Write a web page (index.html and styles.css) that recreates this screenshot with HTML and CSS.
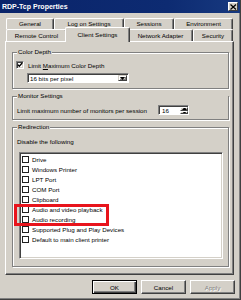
FILE: index.html
```html
<!DOCTYPE html>
<html>
<head>
<meta charset="utf-8">
<link rel="stylesheet" href="styles.css">
</head>
<body>
<div class="window">
  <div class="titlebar">
    <span class="title">RDP-Tcp Properties</span>
    <span class="close"><svg width="7" height="6" viewBox="0 0 7 6"><path d="M0.5 0.5 L6 5.5 M6 0.5 L0.5 5.5" stroke="#000" stroke-width="1.2"/></svg></span>
  </div>
  <div class="tabs">
    <div class="tabrow back">
      <div class="tab">General</div>
      <div class="tab">Log on Settings</div>
      <div class="tab">Sessions</div>
      <div class="tab">Environment</div>
    </div>
    <div class="tabrow front">
      <div class="tab">Remote Control</div>
      <div class="tab selected">Client Settings</div>
      <div class="tab">Network Adapter</div>
      <div class="tab">Security</div>
    </div>
  </div>
  <div class="panel">
    <div class="group g-color">
      <span class="legend">Color Depth</span>
      <div class="checkrow">
        <span class="cb checked"><svg width="6" height="6" viewBox="0 0 6 6"><path d="M0.8 2.6 L2.3 4.2 L5.2 1" fill="none" stroke="#000" stroke-width="1.3"/></svg></span>
        <span>Limit <u>M</u>aximum Color Depth</span>
      </div>
      <div class="combo">
        <span class="combo-text">16 bits per pixel</span>
        <span class="combo-btn"><svg width="5" height="3" viewBox="0 0 5 3"><path d="M0 0 H5 L2.5 3 Z" fill="#000"/></svg></span>
      </div>
    </div>
    <div class="group g-monitor">
      <span class="legend">Monitor Settings</span>
      <div class="monrow">
        <span>Limit maximum number of monitors per session</span>
        <div class="spin">
          <span class="spin-text">16</span>
          <span class="spin-btns">
            <span class="spin-btn"><svg width="5" height="3" viewBox="0 0 5 3"><path d="M0 3 H5 L2.5 0 Z" fill="#000"/></svg></span>
            <span class="spin-btn"><svg width="5" height="3" viewBox="0 0 5 3"><path d="M0 0 H5 L2.5 3 Z" fill="#000"/></svg></span>
          </span>
        </div>
      </div>
    </div>
    <div class="group g-redir">
      <span class="legend">Redirection</span>
      <div class="disable">Disable the following</div>
      <div class="list">
        <div class="item"><span class="lcb"></span>Drive</div>
        <div class="item"><span class="lcb"></span>Windows Printer</div>
        <div class="item"><span class="lcb"></span>LPT Port</div>
        <div class="item"><span class="lcb"></span>COM Port</div>
        <div class="item"><span class="lcb"></span>Clipboard</div>
        <div class="item"><span class="lcb"></span>Audio and video playback</div>
        <div class="item"><span class="lcb"></span>Audio recording</div>
        <div class="item"><span class="lcb"></span>Supported Plug and Play Devices</div>
        <div class="item"><span class="lcb"></span>Default to main client printer</div>
        <div class="highlight"></div>
      </div>
    </div>
  </div>
  <div class="buttons">
    <div class="btn default">OK</div>
    <div class="btn">Cancel</div>
    <div class="btn disabled">Apply</div>
  </div>
</div>
</body>
</html>
```
FILE: styles.css
```css
* { box-sizing: border-box; }
html, body { margin: 0; padding: 0; background: #d4d0c8; }
.window {
  width: 241px;
  height: 300px;
  background: #d4d0c8;
  font-family: "Liberation Sans", Arial, sans-serif;
  font-size: 6.2px;
  color: #000;
  border-right: 1px solid #404040;
  border-bottom: 1px solid #404040;
  box-shadow: inset -1px -1px 0 #808080;
  overflow: hidden;
}
.titlebar {
  height: 13px;
  background: linear-gradient(90deg, #0a246a 0%, #0d2b72 70%, #17397f 100%);
  color: #fff;
  display: flex;
  align-items: center;
  justify-content: space-between;
  padding: 0 2px 0 2px;
}
.title { font-weight: bold; font-size: 7px; }
.close {
  width: 10px;
  height: 9px;
  background: #d4d0c8;
  border: 1px solid;
  border-color: #fff #404040 #404040 #fff;
  display: flex;
  align-items: center;
  justify-content: center;
}
.close svg { display: block; }
.tabs { padding: 5px 0 0 6px; }
.tabrow { display: grid; }
.back { grid-template-columns: 48px 70px 50px 59px; height: 11px; }
.front { grid-template-columns: 61px 61px 65px 40px; height: 12px; margin-top: 0; }
.tab {
  border: 1px solid;
  border-color: #fff #404040 transparent #fff;
  border-bottom: none;
  border-radius: 2px 2px 0 0;
  box-shadow: inset -1px 0 0 #808080;
  background: #d4d0c8;
  display: flex;
  align-items: center;
  justify-content: center;
  white-space: nowrap;
  padding-bottom: 1px;
}
.front .tab { padding-bottom: 0; }
.tab.selected {
  margin: -2px -2px -1px -2px;
  position: relative;
  z-index: 2;
  padding-bottom: 2px;
}
.panel {
  margin-left: 5px;
  width: 229px;
  height: 234px;
  border: 1px solid;
  border-color: #fff #404040 #404040 #fff;
  box-shadow: inset -1px -1px 0 #808080;
  padding: 0 4px 0 6px;
  display: flex;
  flex-direction: column;
}
.group {
  border: 1px solid #808080;
  box-shadow: inset 1px 1px 0 #fff, 1px 1px 0 #fff;
  display: flex;
  flex-direction: column;
  align-items: flex-start;
}
.legend {
  margin: -5px 0 0 4px;
  height: 8px;
  line-height: 8px;
  padding: 0 1px;
  background: #d4d0c8;
  white-space: nowrap;
}
.g-color { margin-top: 10px; height: 37px; }
.g-monitor { margin-top: 7px; height: 24px; align-items: stretch; }
.g-redir { margin-top: 7px; height: 140px; }
.checkrow {
  margin: 5px 0 0 3px;
  height: 8px;
  display: flex;
  align-items: center;
  gap: 4px;
}
.cb {
  width: 8px;
  height: 8px;
  background: #fff;
  border: 1px solid;
  border-color: #808080 #fff #fff #808080;
  box-shadow: inset 1px 1px 0 #404040, inset -1px -1px 0 #d4d0c8;
  display: flex;
  align-items: center;
  justify-content: center;
}
.cb svg { display: block; }
.combo {
  margin: 4px 0 0 14px;
  width: 102px;
  height: 10px;
  background: #fff;
  border: 1px solid;
  border-color: #808080 #fff #fff #808080;
  box-shadow: inset 1px 1px 0 #404040;
  display: flex;
  align-items: stretch;
  padding: 1px 1px 1px 2px;
}
.combo-text { flex: 1; display: flex; align-items: center; }
.combo-btn {
  width: 9px;
  background: #d4d0c8;
  border: 1px solid;
  border-color: #d4d0c8 #404040 #404040 #d4d0c8;
  box-shadow: inset 1px 1px 0 #fff, inset -1px -1px 0 #808080;
  display: flex;
  align-items: center;
  justify-content: center;
}
.combo-btn svg, .spin-btn svg { display: block; }
.monrow {
  margin: 5px 39px 0 4px;
  height: 10px;
  display: flex;
  align-items: center;
  justify-content: space-between;
}
.spin {
  width: 31px;
  height: 10px;
  background: #fff;
  border: 1px solid;
  border-color: #808080 #fff #fff #808080;
  box-shadow: inset 1px 1px 0 #404040;
  display: flex;
  padding: 1px 0 0 1px;
}
.spin-text { flex: 1; padding-left: 2px; display: flex; align-items: center; }
.spin-btns { width: 8px; display: flex; flex-direction: column; }
.spin-btn {
  flex: 1;
  background: #d4d0c8;
  border: 1px solid;
  border-color: #fff #404040 #404040 #fff;
  display: flex;
  align-items: center;
  justify-content: center;
  overflow: hidden;
}
.disable {
  margin: 7px 0 0 4px;
  height: 8px;
  line-height: 8px;
}
.list {
  position: relative;
  margin: 6px 0 0 6px;
  width: 204px;
  height: 107px;
  background: #fff;
  border: 1px solid;
  border-color: #808080 #fff #fff #808080;
  box-shadow: inset 1px 1px 0 #404040, inset -1px -1px 0 #d4d0c8;
  padding: 1px 2px 0 2px;
}
.item {
  height: 10px;
  display: flex;
  align-items: center;
  gap: 3px;
  white-space: nowrap;
}
.lcb {
  width: 7px;
  height: 7px;
  background: #fff;
  border: 1.5px solid #202020;
}
.highlight {
  position: absolute;
  left: -6px;
  top: 51px;
  width: 95px;
  height: 22px;
  border: 3px solid #e8141c;
}
.buttons {
  margin-top: 5px;
  display: flex;
  justify-content: flex-end;
  gap: 4px;
  padding-right: 5px;
}
.btn {
  width: 45px;
  height: 14px;
  border: 1px solid;
  border-color: #fff #404040 #404040 #fff;
  box-shadow: inset -1px -1px 0 #808080;
  display: flex;
  align-items: center;
  justify-content: center;
}
.btn.default {
  border: 1px solid #000;
  box-shadow: inset 1px 1px 0 #fff, inset -1px -1px 0 #404040, inset -2px -2px 0 #808080;
}
.btn.disabled { color: #808080; text-shadow: 1px 1px 0 #fff; }
```
